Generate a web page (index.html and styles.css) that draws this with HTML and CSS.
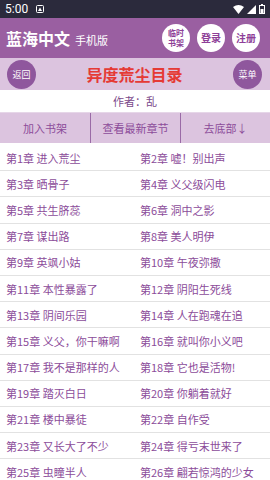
FILE: index.html
```html
<!DOCTYPE html>
<html lang="zh">
<head>
<meta charset="utf-8">
<title>异度荒尘目录</title>
<link rel="stylesheet" href="styles.css">
</head>
<body>
<div class="status">
  <div class="st-left">
    <span class="time">5:00</span>
    <svg class="st-a" width="8" height="8" viewBox="0 0 8 8"><rect x="0.5" y="0.5" width="7" height="7" rx="1" fill="none" stroke="#fff" stroke-width="1"/><path d="M2 6 L4 2.5 L6 6 Z" fill="#fff"/></svg>
  </div>
  <div class="st-right">
    <svg width="11" height="9" viewBox="0 0 11 9"><path d="M0 2 Q5.5 -2 11 2 L5.5 9 Z" fill="#fff"/></svg>
    <svg width="9" height="9" viewBox="0 0 9 9"><path d="M9 0 L9 9 L0 9 Z" fill="#fff"/></svg>
    <svg width="6" height="10" viewBox="0 0 6 10"><rect x="0.5" y="1.5" width="5" height="8" fill="none" stroke="#fff" stroke-width="1"/><rect x="2" y="0" width="2" height="1.5" fill="#fff"/><rect x="1.5" y="5" width="3" height="4" fill="#fff"/></svg>
  </div>
</div>
<header class="top">
  <div class="brand"><span class="logo">蓝海中文</span><span class="sub">手机版</span></div>
  <div class="actions">
    <a class="circle small"><span>临时</span><span>书架</span></a>
    <a class="circle">登录</a>
    <a class="circle">注册</a>
  </div>
</header>
<nav class="bar">
  <a class="pcircle">返回</a>
  <h1 class="title">异度荒尘目录</h1>
  <a class="pcircle">菜单</a>
</nav>
<div class="author">作者：乱</div>
<div class="btns">
  <a class="btn">加入书架</a>
  <a class="btn">查看最新章节</a>
  <a class="btn">去底部↓</a>
</div>
<ul class="list">
  <li>第1章 进入荒尘</li><li>第2章 嘘！别出声</li>
  <li>第3章 晒骨子</li><li>第4章 义父级闪电</li>
  <li>第5章 共生脐蕊</li><li>第6章 洞中之影</li>
  <li>第7章 谋出路</li><li>第8章 美人明伊</li>
  <li>第9章 英飒小姑</li><li>第10章 午夜弥撒</li>
  <li>第11章 本性暴露了</li><li>第12章 阴阳生死线</li>
  <li>第13章 阴间乐园</li><li>第14章 人在跑魂在追</li>
  <li>第15章 义父，你干嘛啊</li><li>第16章 就叫你小义吧</li>
  <li>第17章 我不是那样的人</li><li>第18章 它也是活物!</li>
  <li>第19章 踏灭白日</li><li>第20章 你躺着就好</li>
  <li>第21章 楼中暴徒</li><li>第22章 自作受</li>
  <li>第23章 又长大了不少</li><li>第24章 得亏末世来了</li>
  <li>第25章 虫瞳半人</li><li>第26章 翩若惊鸿的少女</li>
</ul>
</body>
</html>
```

FILE: styles.css
```css
* { box-sizing: border-box; margin: 0; padding: 0; }
body {
  width: 270px;
  height: 480px;
  overflow: hidden;
  background: #fff;
  font-family: "Noto Sans CJK SC", "Noto Sans", sans-serif;
}
a { text-decoration: none; }
.status {
  height: 18px;
  background: #2b2a3c;
  display: flex;
  align-items: center;
  justify-content: space-between;
  padding: 0 5px 0 5px;
  color: #fff;
}
.st-left { display: flex; align-items: center; gap: 8px; }
.time { font-family: Roboto, "Noto Sans", sans-serif; font-size: 12px; line-height: 1; }
.st-right { display: flex; align-items: center; gap: 3px; }
.top {
  height: 40px;
  background: #9a5fa1;
  display: flex;
  align-items: center;
  justify-content: space-between;
  padding: 0 10px 0 6px;
}
.brand { display: flex; align-items: baseline; gap: 5px; color: #fff; }
.logo { font-size: 16px; font-weight: 700; line-height: 1; }
.sub { font-size: 11px; line-height: 1; }
.actions { display: flex; gap: 7px; }
.circle {
  width: 28px;
  height: 28px;
  border-radius: 50%;
  background: #fff;
  color: #8e3f98;
  font-size: 10px;
  font-weight: 700;
  display: flex;
  flex-direction: column;
  align-items: center;
  justify-content: center;
  text-align: center;
  line-height: 1;
}
.circle.small { font-size: 8px; }
.circle.small span { display: block; line-height: 10px; height: 10px; }
.bar {
  height: 32px;
  background: #dcc4df;
  display: flex;
  align-items: center;
  justify-content: space-between;
  padding: 0 8px 0 7px;
}
.pcircle {
  width: 29px;
  height: 29px;
  border-radius: 50%;
  background: #8f579d;
  color: #fff;
  font-size: 9px;
  display: flex;
  align-items: center;
  justify-content: center;
}
.title {
  font-size: 16px;
  font-weight: 700;
  color: #e53a35;
  line-height: 1;
}
.author {
  height: 23px;
  display: flex;
  align-items: center;
  justify-content: center;
  color: #7b4a8a;
  font-size: 11px;
  border-bottom: 1px solid #e6d6e8;
}
.btns {
  height: 30px;
  background: #dcc4df;
  display: grid;
  grid-template-columns: 90px 90px 90px;
}
.btn {
  display: flex;
  align-items: center;
  justify-content: center;
  color: #8c4c9a;
  font-size: 11px;
}
.btn + .btn { border-left: 1px solid #9a6aa6; }
.list {
  list-style: none;
  margin-top: 2px;
  display: grid;
  grid-template-columns: 134px 136px;
}
.list li {
  height: 26.2px;
  border-bottom: 1px solid #e2e2e2;
  color: #8c4c9a;
  font-size: 11px;
  display: flex;
  align-items: center;
  padding-left: 6px;
  white-space: nowrap;
}
```
